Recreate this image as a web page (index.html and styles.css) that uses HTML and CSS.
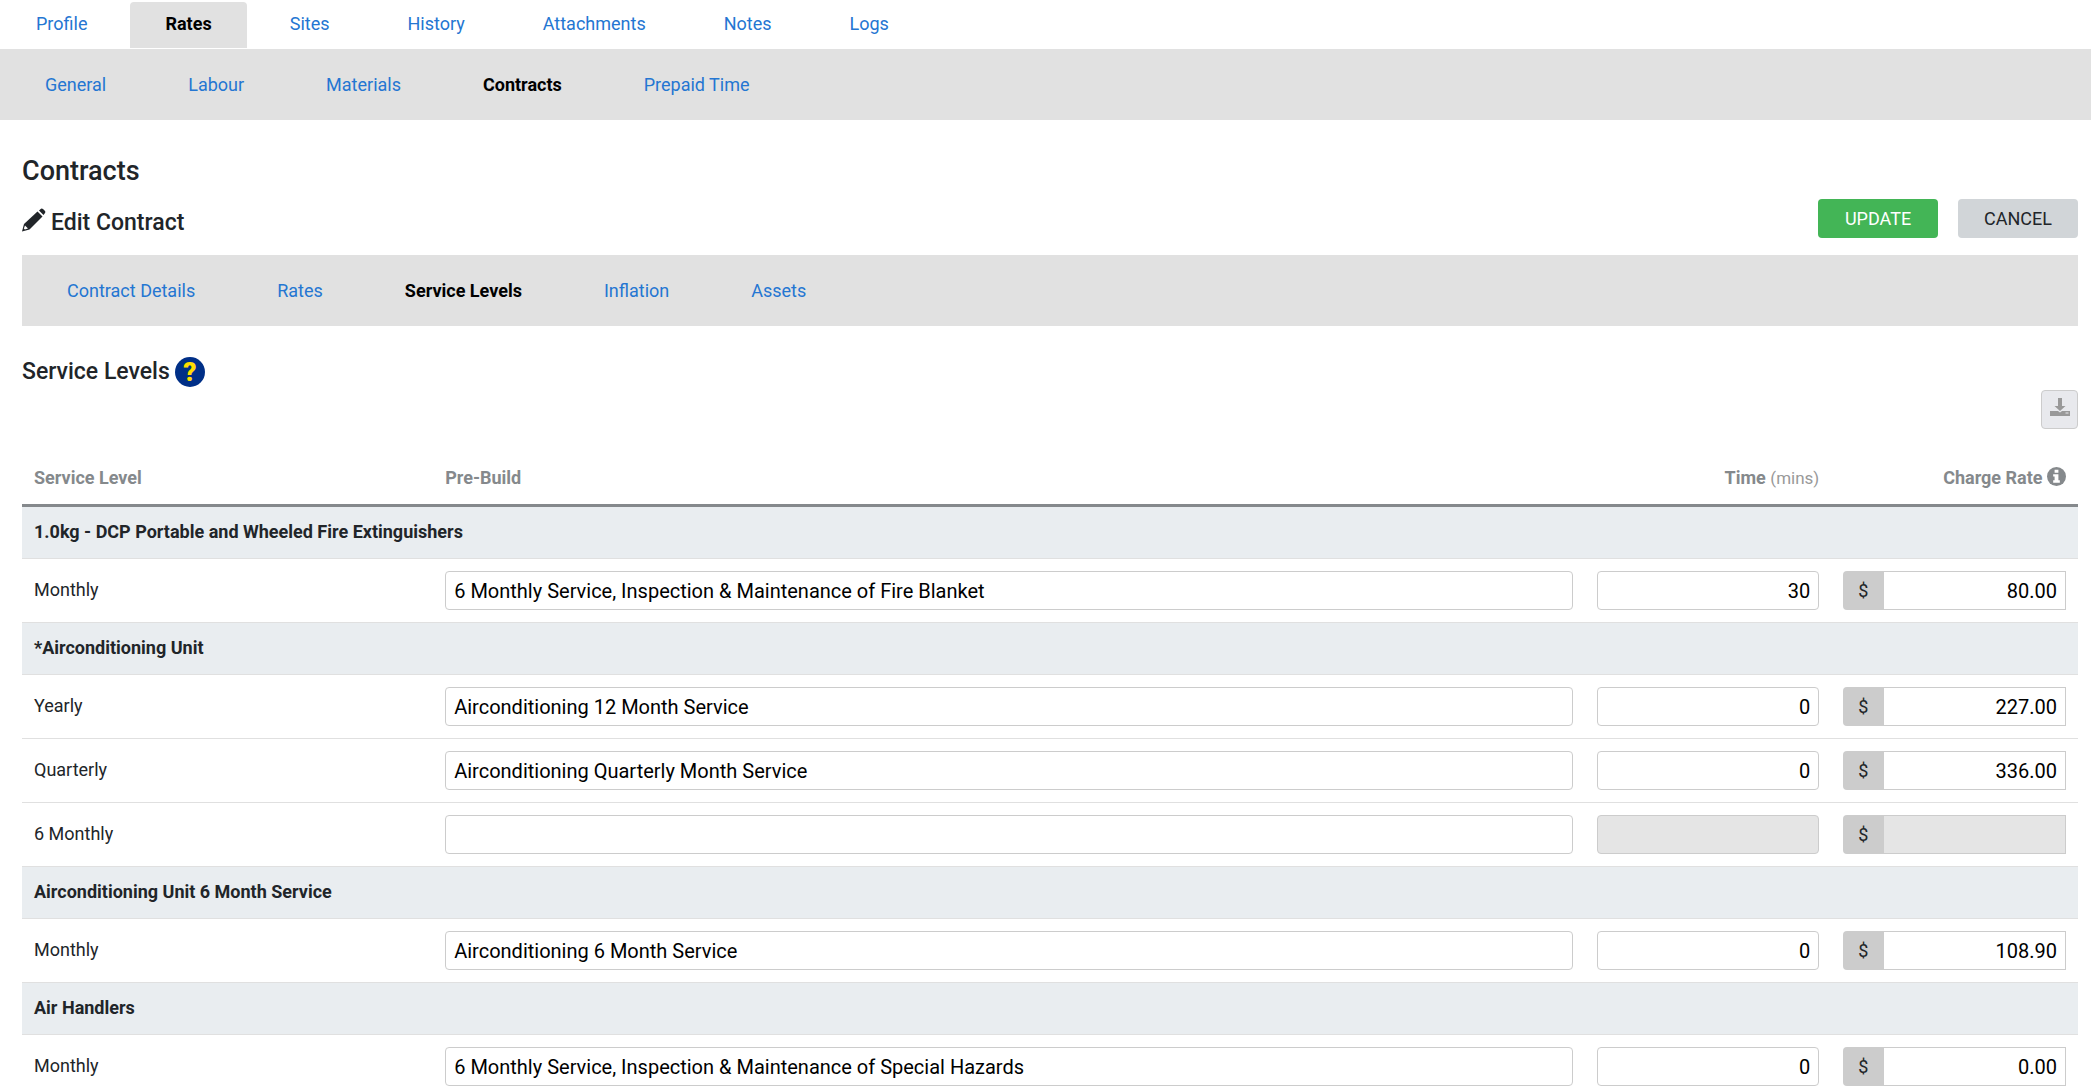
FILE: index.html
```html
<!DOCTYPE html>
<html lang="en">
<head>
    <meta charset="UTF-8">
    <meta name="viewport" content="width=device-width, initial-scale=1.0">
    <title>Contracts - Service Levels</title>
    <link rel="stylesheet" href="styles.css">
</head>
<body>
    <nav class="main-tabs">
        <a href="#">Profile</a>
        <a href="#" class="active">Rates</a>
        <a href="#">Sites</a>
        <a href="#">History</a>
        <a href="#">Attachments</a>
        <a href="#">Notes</a>
        <a href="#">Logs</a>
    </nav>
    <nav class="sub-tabs">
        <a href="#">General</a>
        <a href="#">Labour</a>
        <a href="#">Materials</a>
        <a href="#" class="active">Contracts</a>
        <a href="#">Prepaid Time</a>
    </nav>

    <main class="content">
        <h1>Contracts</h1>
        <div class="title-row">
            <h2>
                <svg class="icon-pencil" viewBox="0 0 24 24" aria-hidden="true">
                    <path d="M0 23.500l2-7.500L15.500 3.500l5 5L7.500 21.500z"/>
                    <path d="M17 2.500L19 .8q1-.6 2 .3l2 2q.8 1 0 2l-1.500 2z"/>
                    <path class="tip" d="M3 17.500l3 3-3.200 1-.9-.9z"/>
                </svg>
                Edit Contract
            </h2>
            <div class="actions">
                <button type="submit" class="btn btn-update">UPDATE</button>
                <button type="button" class="btn btn-cancel">CANCEL</button>
            </div>
        </div>

        <nav class="sub-tabs">
            <a href="#">Contract Details</a>
            <a href="#">Rates</a>
            <a href="#" class="active">Service Levels</a>
            <a href="#">Inflation</a>
            <a href="#">Assets</a>
        </nav>

        <h2 class="section-title">
            Service Levels
            <a href="#" class="help" aria-label="Help">?</a>
        </h2>

        <div class="toolbar">
            <button type="button" class="btn-download" aria-label="Download">
                <svg viewBox="0 0 20 20" aria-hidden="true">
                    <path d="M8 1h4v8h3.500L10 14 4.500 9H8z"/>
                    <path d="M0 14h8l2 1.500 2-1.500h8v5H0z"/>
                    <path class="slot" d="M15.500 15.500h3v1h-3z"/>
                </svg>
            </button>
        </div>

        <table class="levels">
            <thead>
                <tr>
                    <th class="col-level">Service Level</th>
                    <th class="col-build">Pre-Build</th>
                    <th class="col-num">Time <span class="unit">(mins)</span></th>
                    <th class="col-num">Charge Rate
                        <svg class="icon-info" viewBox="0 0 20 20" aria-hidden="true">
                            <circle cx="10" cy="10" r="10"/>
                            <path d="M8 3h4v3H8zM6.500 7.500H12V14h1.500v2.500h-7V14H8v-4H6.500z"/>
                        </svg>
                    </th>
                </tr>
            </thead>
            <tbody>
                <tr class="group"><td colspan="4">1.0kg - DCP Portable and Wheeled Fire Extinguishers</td></tr>
                <tr>
                    <td>Monthly</td>
                    <td><input type="text" aria-label="Pre-Build" value="6 Monthly Service, Inspection &amp; Maintenance of Fire Blanket"></td>
                    <td><input type="text" class="num" aria-label="Time (mins)" value="30"></td>
                    <td><label class="money"><span>$</span><input type="text" class="num" aria-label="Charge Rate" value="80.00"></label></td>
                </tr>
                <tr class="group"><td colspan="4">*Airconditioning Unit</td></tr>
                <tr>
                    <td>Yearly</td>
                    <td><input type="text" aria-label="Pre-Build" value="Airconditioning 12 Month Service"></td>
                    <td><input type="text" class="num" aria-label="Time (mins)" value="0"></td>
                    <td><label class="money"><span>$</span><input type="text" class="num" aria-label="Charge Rate" value="227.00"></label></td>
                </tr>
                <tr>
                    <td>Quarterly</td>
                    <td><input type="text" aria-label="Pre-Build" value="Airconditioning Quarterly Month Service"></td>
                    <td><input type="text" class="num" aria-label="Time (mins)" value="0"></td>
                    <td><label class="money"><span>$</span><input type="text" class="num" aria-label="Charge Rate" value="336.00"></label></td>
                </tr>
                <tr>
                    <td>6 Monthly</td>
                    <td><input type="text" aria-label="Pre-Build" value=""></td>
                    <td><input type="text" class="num" aria-label="Time (mins)" value="" disabled></td>
                    <td><label class="money"><span>$</span><input type="text" class="num" aria-label="Charge Rate" value="" disabled></label></td>
                </tr>
                <tr class="group"><td colspan="4">Airconditioning Unit 6 Month Service</td></tr>
                <tr>
                    <td>Monthly</td>
                    <td><input type="text" aria-label="Pre-Build" value="Airconditioning 6 Month Service"></td>
                    <td><input type="text" class="num" aria-label="Time (mins)" value="0"></td>
                    <td><label class="money"><span>$</span><input type="text" class="num" aria-label="Charge Rate" value="108.90"></label></td>
                </tr>
                <tr class="group"><td colspan="4">Air Handlers</td></tr>
                <tr>
                    <td>Monthly</td>
                    <td><input type="text" aria-label="Pre-Build" value="6 Monthly Service, Inspection &amp; Maintenance of Special Hazards"></td>
                    <td><input type="text" class="num" aria-label="Time (mins)" value="0"></td>
                    <td><label class="money"><span>$</span><input type="text" class="num" aria-label="Charge Rate" value="0.00"></label></td>
                </tr>
            </tbody>
        </table>
    </main>
</body>
</html>
```

FILE: styles.css
```css
* {
    margin: 0;
    padding: 0;
    box-sizing: border-box;
}

body {
    font-family: Roboto, "Liberation Sans", sans-serif;
    font-size: 18px;
    line-height: 24px;
    color: #212529;
    background: #fff;
}

a {
    color: #2476d2;
    text-decoration: none;
}

/* Tabs */
.main-tabs {
    display: flex;
    gap: 8px;
    padding: 2px 1px 1px;
}

.main-tabs a {
    padding: 10px 35px 12px;
    border-radius: 4px 4px 0 0;
}

.main-tabs .active {
    background: #e1e1e1;
}

.sub-tabs {
    display: flex;
    gap: 82px;
    padding: 24px 45px 23px;
    background: #e1e1e1;
}

.main-tabs .active,
.sub-tabs .active {
    color: #000;
    font-weight: 700;
}

/* Page headings */
.content {
    padding: 32px 13px 0 22px;
}

h1 {
    font-size: 27px;
    line-height: 38px;
    font-weight: 500;
}

h2 {
    display: flex;
    align-items: center;
    gap: 5px;
    font-size: 23px;
    line-height: 30px;
    font-weight: 500;
}

.title-row {
    display: flex;
    justify-content: space-between;
    align-items: flex-end;
    padding: 9px 0 17px;
}

.icon-pencil {
    width: 24px;
    height: 24px;
    margin-bottom: 6px;
    fill: #212529;
}

.icon-pencil .tip {
    fill: #fff;
}

.actions {
    display: flex;
    gap: 20px;
}

.btn {
    width: 120px;
    height: 39px;
    border: 0;
    border-radius: 4px;
    font: inherit;
    cursor: pointer;
}

.btn-update {
    background: #43b556;
    color: #fff;
}

.btn-cancel {
    background: #d1d5d8;
    color: #212529;
}

.section-title {
    padding-top: 31px;
}

.help {
    width: 30px;
    height: 30px;
    border-radius: 50%;
    background: #002f87;
    color: #ffdd00;
    font-size: 26px;
    font-weight: 900;
    text-align: center;
}

.toolbar {
    display: flex;
    justify-content: flex-end;
    padding: 3px 0 24px;
}

.btn-download {
    width: 37px;
    height: 39px;
    padding-bottom: 6px;
    border: 1px solid #ccc;
    border-radius: 4px;
    background: #e8e9ed;
    cursor: pointer;
}

.btn-download svg {
    width: 20px;
    height: 20px;
    fill: #999;
    vertical-align: middle;
}

.btn-download .slot {
    fill: #e8e9ed;
}

/* Service levels table */
.levels {
    width: 100%;
    table-layout: fixed;
    border-collapse: separate;
    border-spacing: 0;
}

.levels th {
    padding: 13px 12px 14px;
    border-bottom: 3px solid #85898c;
    color: #85898c;
    font-weight: 700;
    text-align: left;
}

.levels td {
    height: 64px;
    padding: 12px;
    border-bottom: 1px solid #e0e0e0;
    vertical-align: middle;
}

.levels td:first-child {
    padding-bottom: 14px;
}

.levels .group td {
    height: 52px;
    background: #e9edf0;
    font-weight: 700;
}

.col-level {
    width: 20%;
}

.col-build {
    width: 56%;
}

.levels .col-num {
    width: 12%;
    text-align: right;
}

.unit {
    color: #999;
    font-size: 17px;
    font-weight: 400;
}

.icon-info {
    width: 19px;
    height: 19px;
    fill: #85898c;
    vertical-align: -2px;
}

.icon-info path {
    fill: #fff;
}

.levels input {
    display: block;
    width: 100%;
    height: 39px;
    padding: 0 8px;
    border: 1px solid #ccc;
    border-radius: 4px;
    background: #fff;
    color: #000;
    font-family: inherit;
    font-size: 20px;
}

.levels input:disabled {
    background: #e5e5e5;
}

.levels .num {
    text-align: right;
}

.money {
    display: flex;
}

.money span {
    flex: none;
    width: 40px;
    border-radius: 4px 0 0 4px;
    background: #ccc;
    line-height: 39px;
    text-align: center;
}

.levels .money input {
    flex: 1;
    min-width: 0;
    border-radius: 0;
}
```
